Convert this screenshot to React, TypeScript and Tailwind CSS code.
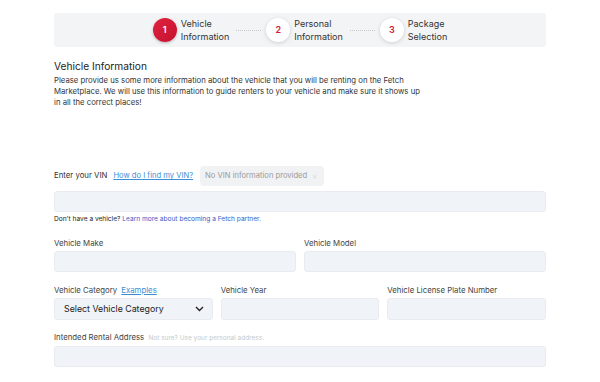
import React from "react";

const font = { fontFamily: "Inter, 'Noto Sans', sans-serif" };

function Step({ n, l1, l2, active }: { n: number; l1: string; l2: string; active?: boolean }) {
  return (
    <div className="flex items-center gap-[4px]">
      <div
        className={
          active
            ? "w-[24px] h-[24px] rounded-full bg-[linear-gradient(135deg,#e0223f,#c4122f)] text-white flex items-center justify-center text-[9px] font-semibold shadow-[0_1px_3px_rgba(0,0,0,0.25)]"
            : "w-[24px] h-[24px] rounded-full bg-white text-[#d3183a] flex items-center justify-center text-[9px] font-semibold shadow-[0_1px_4px_rgba(0,0,0,0.15)]"
        }
      >
        {n}
      </div>
      <div className="text-[9px] leading-[13px] text-[#333]">
        <div>{l1}</div>
        <div>{l2}</div>
      </div>
    </div>
  );
}

function Dots() {
  return <div className="w-[25px] border-t border-dotted border-[#c8c8c8] ml-[7px] mr-[5px]" />;
}

function Input({ className = "" }: { className?: string }) {
  return <div className={"h-[21px] rounded-[3px] bg-[#f0f3f7] border border-[#e8ebef] " + className} />;
}

export default function App() {
  return (
    <div className="w-[600px] h-[382px] bg-white overflow-hidden" style={font}>
      <div className="mx-[54px] pt-[13px]">
        <div className="h-[34px] rounded-[3px] bg-[#f3f4f6] flex items-center justify-center">
          <Step n={1} l1="Vehicle" l2="Information" active />
          <Dots />
          <Step n={2} l1="Personal" l2="Information" />
          <Dots />
          <Step n={3} l1="Package" l2="Selection" />
        </div>

        <div className="mt-[13px] text-[10.2px] text-[#222] leading-[13px]">Vehicle Information</div>
        <div className="mt-[2px] text-[7.75px] leading-[11px] text-[#333] w-[372px]">
          Please provide us some more information about the vehicle that you will be renting on the Fetch Marketplace. We will use this information to guide renters to your vehicle and make sure it shows up in all the correct places!
        </div>

        <div className="mt-[58px] flex items-center h-[20px]">
          <span className="text-[7.8px] text-[#333]">Enter your VIN</span>
          <span className="ml-[6px] text-[7.6px] text-[#3b8fd6] underline">How do I find my VIN?</span>
          <div className="ml-[7px] h-[20px] w-[124px] rounded-[4px] bg-[#f1f2f4] flex items-center px-[5px] text-[7.6px] text-[#9a9a9a] whitespace-nowrap">
            No VIN information provided
            <span className="ml-[5px] text-[6px] text-[#d8d8d8]">✕</span>
          </div>
        </div>
        <Input className="mt-[5px]" />
        <div className="mt-[3px] text-[6.6px] text-[#222]">
          Don't have a vehicle? <span className="text-[#3a5bc7]">Learn more about becoming a Fetch partner.</span>
        </div>

        <div className="mt-[13px] grid grid-cols-2 gap-x-[8px]">
          <div>
            <div className="text-[7.8px] text-[#444] leading-[10px]">Vehicle Make</div>
            <Input className="mt-[3px]" />
          </div>
          <div>
            <div className="text-[7.8px] text-[#444] leading-[10px]">Vehicle Model</div>
            <Input className="mt-[3px]" />
          </div>
        </div>

        <div className="mt-[13px] grid grid-cols-3 gap-x-[8px]">
          <div>
            <div className="text-[7.8px] text-[#444] leading-[10px]">
              Vehicle Category <span className="ml-[2px] text-[#3b8fd6] underline">Examples</span>
            </div>
            <div className="mt-[3px] h-[22px] rounded-[3px] bg-[#f0f3f7] border border-[#e8ebef] flex items-center justify-between pl-[9px] pr-[8px]">
              <span className="text-[8.8px] text-[#222]">Select Vehicle Category</span>
              <svg width="9" height="6" viewBox="0 0 9 6" fill="none">
                <path d="M1 1l3.5 3.5L8 1" stroke="#222" strokeWidth="1.4" />
              </svg>
            </div>
          </div>
          <div>
            <div className="text-[7.8px] text-[#444] leading-[10px]">Vehicle Year</div>
            <Input className="mt-[3px] h-[22px]" />
          </div>
          <div>
            <div className="text-[7.8px] text-[#444] leading-[10px]">Vehicle License Plate Number</div>
            <Input className="mt-[3px] h-[22px]" />
          </div>
        </div>

        <div className="mt-[12px] text-[7.8px] text-[#444] leading-[10px]">
          Intended Rental Address <span className="ml-[2px] text-[6.5px] text-[#c8c8c8]">Not sure? Use your personal address.</span>
        </div>
        <Input className="mt-[3px]" />
      </div>
    </div>
  );
}
